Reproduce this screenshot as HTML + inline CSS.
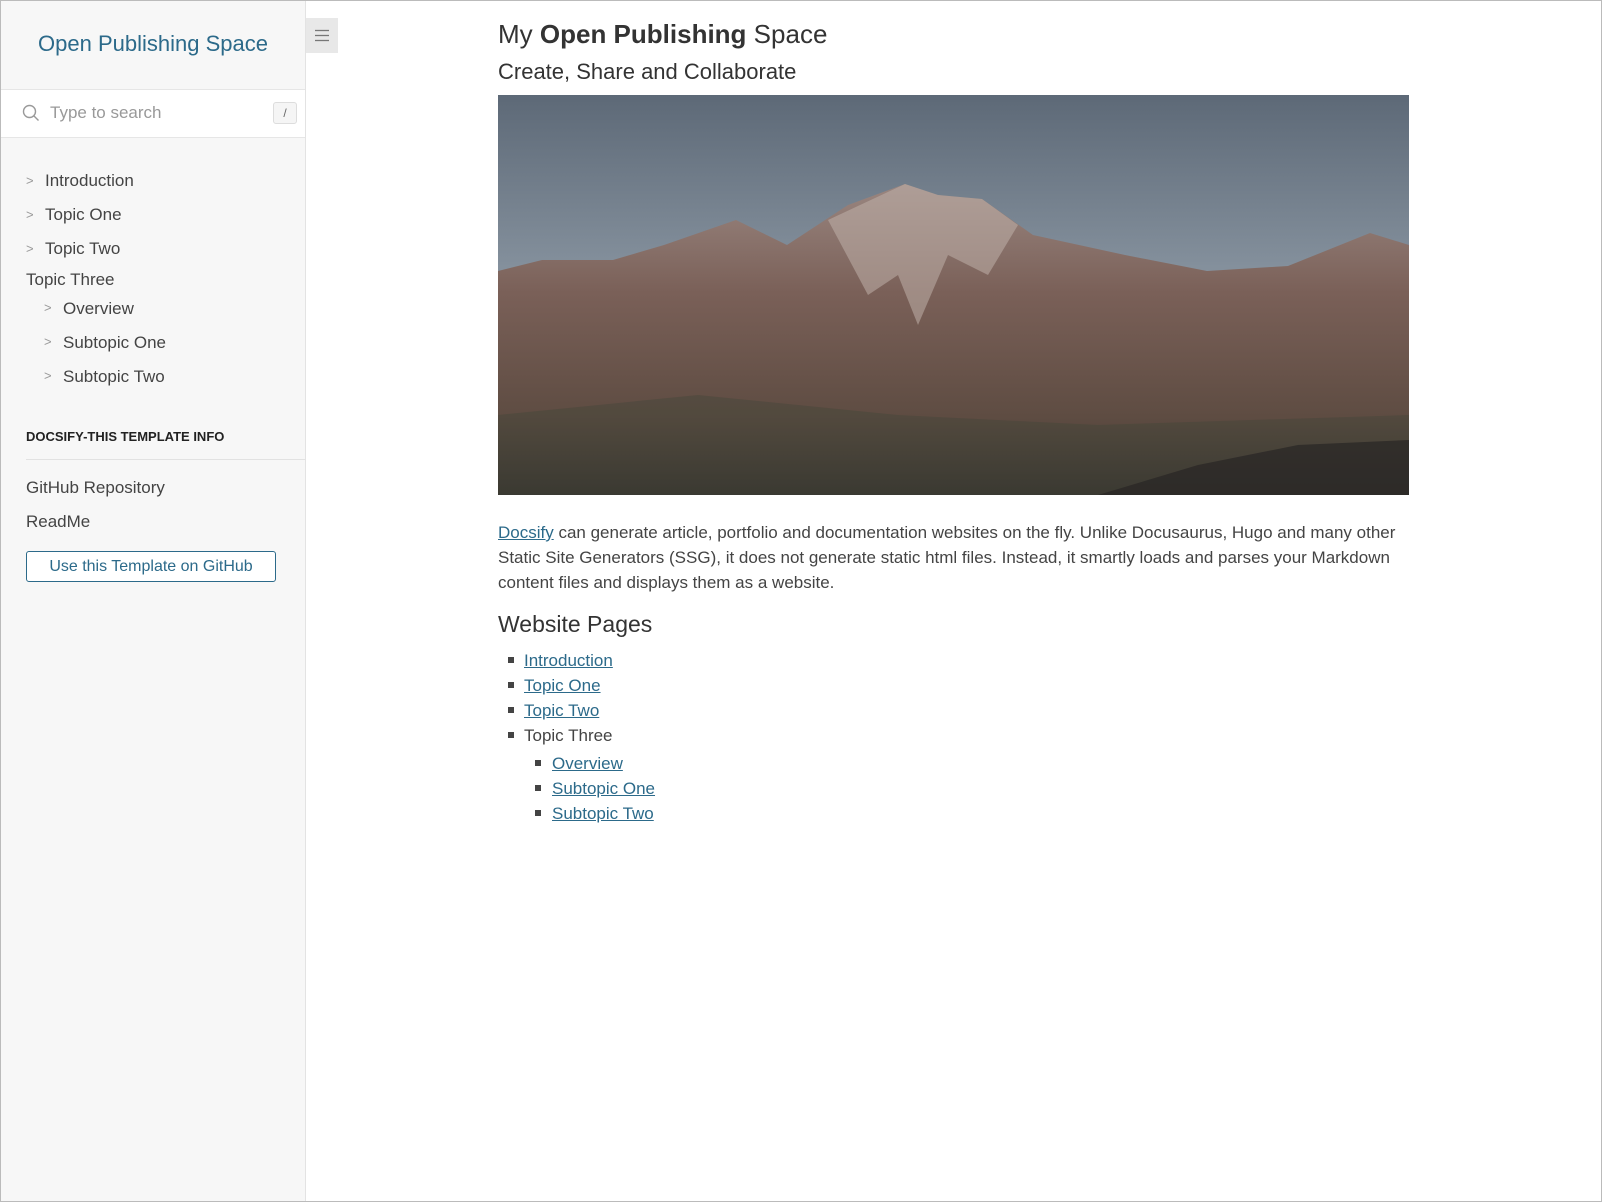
<!DOCTYPE html>
<html><head><meta charset="utf-8"><style>
html,body{margin:0;padding:0;width:1602px;height:1202px;overflow:hidden;background:#fff;font-family:"Liberation Sans",sans-serif;color:#34495e}
.frame{position:absolute;left:0;top:0;width:1600px;height:1200px;border:1px solid #bbb;}
.side{position:absolute;left:1px;top:1px;width:304px;height:1200px;background:#f7f7f7;border-right:1px solid #e3e3e3}
.title{position:absolute;top:30px;left:0;width:304px;text-align:center;font-size:22px;color:#2c6a8a}
.search{position:absolute;top:88px;left:0;width:304px;height:47px;background:#fff;border-top:1px solid #e6e6e6;border-bottom:1px solid #e6e6e6}
.search .ph{position:absolute;left:49px;top:13px;font-size:17px;color:#999}
.search .k{position:absolute;left:272px;top:12px;width:22px;height:20px;border:1px solid #ddd;border-radius:3px;background:#f5f5f5;font-size:12px;color:#666;text-align:center;line-height:20px}
.nav{position:absolute;font-size:17px;color:#444}
.chev{position:absolute;font-size:13px;color:#999}
.sec{position:absolute;left:25px;top:428px;font-size:13px;font-weight:bold;color:#222;letter-spacing:0}
.hr{position:absolute;left:25px;top:458px;width:280px;height:1px;background:#e2e2e2}
.btn{position:absolute;left:25px;top:550px;width:248px;height:29px;border:1px solid #2c6a8a;border-radius:3px;font-size:16px;color:#2c6a8a;text-align:center;line-height:29px;background:#fff}
.tog{position:absolute;left:306px;top:18px;width:32px;height:35px;background:#e8e8e8}
.main{position:absolute;left:498px;top:0;width:911px;color:#333}
a{color:#2c6a8a;text-decoration:underline}
</style></head><body>
<div class="frame"></div>
<div class="side">
<div class="title">Open Publishing Space</div>
<div class="search">
<svg style="position:absolute;left:21px;top:14px" width="18" height="18" viewBox="0 0 18 18"><circle cx="7.5" cy="7.5" r="6" fill="none" stroke="#999" stroke-width="1.4"/><line x1="12" y1="12" x2="16.5" y2="16.5" stroke="#999" stroke-width="1.4"/></svg>
<div class="ph">Type to search</div><div class="k">/</div></div>
<span class="chev" style="left:25px;top:172px">&gt;</span><div class="nav" style="left:44px;top:170px">Introduction</div>
<span class="chev" style="left:25px;top:206px">&gt;</span><div class="nav" style="left:44px;top:204px">Topic One</div>
<span class="chev" style="left:25px;top:240px">&gt;</span><div class="nav" style="left:44px;top:238px">Topic Two</div>
<div class="nav" style="left:25px;top:269px">Topic Three</div>
<span class="chev" style="left:43px;top:299px">&gt;</span><div class="nav" style="left:62px;top:298px">Overview</div>
<span class="chev" style="left:43px;top:333px">&gt;</span><div class="nav" style="left:62px;top:332px">Subtopic One</div>
<span class="chev" style="left:43px;top:367px">&gt;</span><div class="nav" style="left:62px;top:366px">Subtopic Two</div>
<div class="sec">DOCSIFY-THIS TEMPLATE INFO</div>
<div class="hr"></div>
<div class="nav" style="left:25px;top:477px">GitHub Repository</div>
<div class="nav" style="left:25px;top:511px">ReadMe</div>
<div class="btn">Use this Template on GitHub</div>
</div>
<div class="tog"><svg width="32" height="35"><g stroke="#777" stroke-width="1.3"><line x1="9" y1="12.5" x2="23" y2="12.5"/><line x1="9" y1="17.5" x2="23" y2="17.5"/><line x1="9" y1="22.5" x2="23" y2="22.5"/></g></svg></div>
<div class="main">
<div style="position:absolute;top:19px;font-size:26px;white-space:nowrap">My <b>Open Publishing</b> Space</div>
<div style="position:absolute;top:59px;font-size:22px;white-space:nowrap">Create, Share and Collaborate</div>
<svg style="position:absolute;left:0;top:95px" width="911" height="400" viewBox="0 0 911 400">
<defs>
<linearGradient id="sky" x1="0" y1="0" x2="0" y2="1"><stop offset="0" stop-color="#5d6977"/><stop offset="0.5" stop-color="#8a96a2"/><stop offset="1" stop-color="#a3acb5"/></linearGradient>
<linearGradient id="mt" x1="0" y1="0" x2="0" y2="1"><stop offset="0" stop-color="#9a8680"/><stop offset="0.35" stop-color="#7a6058"/><stop offset="0.75" stop-color="#5e4c42"/><stop offset="1" stop-color="#3a3430"/></linearGradient>
</defs>
<rect width="911" height="400" fill="url(#sky)"/>
<polygon fill="url(#mt)" points="0,176 44,165 115,165 166,150 238,125 289,150 350,110 407,89 440,100 484,104 535,140 627,160 709,176 790,171 872,138 911,150 911,400 0,400"/>
<polygon fill="#bfb1aa" opacity="0.55" points="330,125 407,89 440,100 484,104 520,130 490,180 450,160 420,230 400,180 370,200"/>
<polygon fill="#3d4636" opacity="0.35" points="0,320 200,300 400,320 600,330 911,320 911,400 0,400"/>
<polygon fill="#2a2726" opacity="0.75" points="600,400 700,370 800,350 911,345 911,400"/>
</svg>
<div style="position:absolute;top:520px;width:911px;font-size:17px;line-height:25px;color:#444"><a>Docsify</a> can generate article, portfolio and documentation websites on the fly. Unlike Docusaurus, Hugo and many other Static Site Generators (SSG), it does not generate static html files. Instead, it smartly loads and parses your Markdown content files and displays them as a website.</div>
<div style="position:absolute;top:611px;font-size:23px;color:#333">Website Pages</div>
<div style="position:absolute;top:648px;font-size:17px;line-height:25px;color:#444">
<div style="position:absolute;left:10px;top:9px;width:6px;height:6px;background:#444"></div><a style="position:absolute;left:26px;white-space:nowrap">Introduction</a>
<div style="position:absolute;left:10px;top:34px;width:6px;height:6px;background:#444"></div><a style="position:absolute;left:26px;top:25px;white-space:nowrap">Topic One</a>
<div style="position:absolute;left:10px;top:59px;width:6px;height:6px;background:#444"></div><a style="position:absolute;left:26px;top:50px;white-space:nowrap">Topic Two</a>
<div style="position:absolute;left:10px;top:84px;width:6px;height:6px;background:#444"></div><span style="position:absolute;left:26px;top:75px;white-space:nowrap">Topic Three</span>
<div style="position:absolute;left:37px;top:112px;width:6px;height:6px;background:#444"></div><a style="position:absolute;left:54px;top:103px;white-space:nowrap">Overview</a>
<div style="position:absolute;left:37px;top:137px;width:6px;height:6px;background:#444"></div><a style="position:absolute;left:54px;top:128px;white-space:nowrap">Subtopic One</a>
<div style="position:absolute;left:37px;top:162px;width:6px;height:6px;background:#444"></div><a style="position:absolute;left:54px;top:153px;white-space:nowrap">Subtopic Two</a>
</div>
</div>
</body></html>
